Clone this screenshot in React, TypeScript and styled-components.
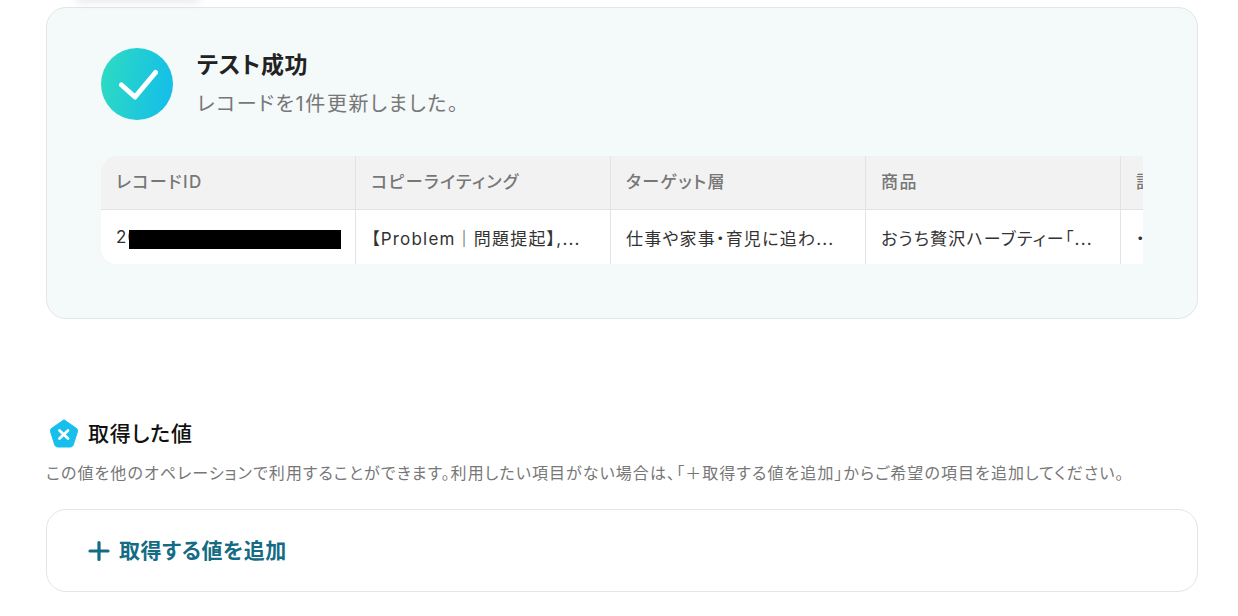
import React from 'react';
import styled, { createGlobalStyle } from 'styled-components';

const GlobalStyle = createGlobalStyle`
  html, body {
    margin: 0;
    padding: 0;
    background: #fff;
    overflow: hidden;
  }
  body {
    font-family: Inter, 'Noto Sans CJK JP', sans-serif;
    font-feature-settings: 'palt';
  }
`;

const Page = styled.div`
  width: 1238px;
  height: 616px;
  box-sizing: border-box;
  padding: 7px 40px 0 46px;
  position: relative;
  overflow: hidden;
`;

const TopShadow = styled.div`
  position: absolute;
  left: 76px;
  top: -12px;
  width: 124px;
  height: 12px;
  box-shadow: 0 2px 10px rgba(0, 0, 0, 0.1);
`;

const ResultPanel = styled.section`
  box-sizing: border-box;
  height: 312px;
  padding: 40px 54px 0;
  background: #f4f9f9;
  border: 1px solid #e3e6e6;
  border-radius: 20px;
`;

const Status = styled.div`
  display: flex;
  align-items: center;
  gap: 24px;
  height: 72px;
`;

const StatusBadge = styled.div`
  width: 72px;
  height: 72px;
  border-radius: 50%;
  background: linear-gradient(100deg, #2fdcc0 0%, #12bcec 100%);
  display: flex;
  align-items: center;
  justify-content: center;
`;

const StatusText = styled.div`
  display: flex;
  flex-direction: column;
  gap: 10px;
  margin-top: -3px;
`;

const StatusTitle = styled.h2`
  margin: 0;
  font-size: 23px;
  line-height: 32px;
  font-weight: 700;
  letter-spacing: 0.6px;
  color: #222;
`;

const StatusNote = styled.p`
  margin: 0;
  font-size: 20px;
  line-height: 26px;
  font-weight: 400;
  letter-spacing: 1.6px;
  color: #777;
`;

const TableWrap = styled.div`
  margin-top: 36px;
  width: 1042px;
  overflow: hidden;
  border-radius: 16px 0 0 16px;
`;

const Table = styled.div`
  display: grid;
  grid-template-columns: repeat(5, 255px);
  grid-template-rows: 54px 54px;
  width: 1275px;
`;

const HeadCell = styled.div`
  box-sizing: border-box;
  display: flex;
  align-items: center;
  padding: 0 15px 4px;
  background: #f2f2f2;
  border-right: 1px solid #e3e3e3;
  border-bottom: 1px solid #e3e3e3;
  font-size: 17px;
  font-weight: 500;
  letter-spacing: 1.4px;
  color: #777;
  white-space: nowrap;
`;

const BodyCell = styled.div`
  box-sizing: border-box;
  display: flex;
  align-items: center;
  padding: 0 15px;
  background: #fff;
  border-right: 1px solid #e3e3e3;
  font-size: 17px;
  letter-spacing: 1.2px;
  color: #333;
  white-space: nowrap;
  position: relative;
`;

const Redaction = styled.span`
  position: absolute;
  left: 28px;
  top: 20px;
  width: 212px;
  height: 19px;
  background: #000;
`;

const ValuesHeading = styled.div`
  margin-top: 99px;
  display: flex;
  align-items: center;
  gap: 8px;
  height: 32px;
  padding-left: 2px;
`;

const ValuesTitle = styled.h3`
  margin: 0;
  font-size: 21px;
  line-height: 32px;
  font-weight: 500;
  letter-spacing: 0.8px;
  color: #111;
`;

const ValuesNote = styled.p`
  margin: 11px 0 0;
  font-size: 16px;
  line-height: 24px;
  letter-spacing: 1.08px;
  color: #777;
  white-space: nowrap;
`;

const AddBox = styled.div`
  margin-top: 24px;
  box-sizing: border-box;
  height: 83px;
  padding-left: 40px;
  display: flex;
  align-items: center;
  gap: 8px;
  background: #fff;
  border: 1px solid #e3e6e6;
  border-radius: 20px;
  color: #136c84;
`;

const AddLabel = styled.span`
  margin-bottom: 3px;
  font-size: 21px;
  font-weight: 700;
  letter-spacing: 0.55px;
`;

const columns = ['レコードID', 'コピーライティング', 'ターゲット層', '商品', '訴求ポイント'];
const row = ['20', '【Problem｜問題提起】,...', '仕事や家事・育児に追わ...', 'おうち贅沢ハーブティー「...', '・'];

export default function App() {
  return (
    <Page>
      <GlobalStyle />
      <TopShadow />
      <ResultPanel>
        <Status>
          <StatusBadge>
            <svg width="42" height="36" viewBox="0 0 42 36" fill="none">
              <path d="M5.5 19 L19 31 L39.5 6.5" stroke="#fff" strokeWidth="5" strokeLinecap="round" strokeLinejoin="round" />
            </svg>
          </StatusBadge>
          <StatusText>
            <StatusTitle>テスト成功</StatusTitle>
            <StatusNote>レコードを1件更新しました。</StatusNote>
          </StatusText>
        </Status>
        <TableWrap>
          <Table>
            {columns.map((c) => (
              <HeadCell key={c}>{c}</HeadCell>
            ))}
            {row.map((v, i) => (
              <BodyCell key={i}>
                {v}
                {i === 0 && <Redaction />}
              </BodyCell>
            ))}
          </Table>
        </TableWrap>
      </ResultPanel>
      <ValuesHeading>
        <svg width="32" height="30" viewBox="0 0 32 30">
          <path d="M16 0.8 L28.5 9.5 Q30 10.7 29.5 12.5 L25.2 26 Q24.5 28 22.4 28 L9.6 28 Q7.5 28 6.8 26 L2.5 12.5 Q2 10.7 3.5 9.5 Z" fill="#17bfec" stroke="#17bfec" strokeWidth="1" strokeLinejoin="round" />
          <path d="M11.5 11.5 L20 19.5 M20 11.5 L11.5 19.5" stroke="#fff" strokeWidth="2.8" strokeLinecap="round" fill="none" />
        </svg>
        <ValuesTitle>取得した値</ValuesTitle>
      </ValuesHeading>
      <ValuesNote>この値を他のオペレーションで利用することができます。利用したい項目がない場合は、「＋取得する値を追加」からご希望の項目を追加してください。</ValuesNote>
      <AddBox>
        <svg width="24" height="24" viewBox="0 0 24 24" fill="none">
          <path d="M12 3.5 V20.5 M3 12 H21" stroke="#136c84" strokeWidth="3.2" strokeLinecap="round" />
        </svg>
        <AddLabel>取得する値を追加</AddLabel>
      </AddBox>
    </Page>
  );
}
